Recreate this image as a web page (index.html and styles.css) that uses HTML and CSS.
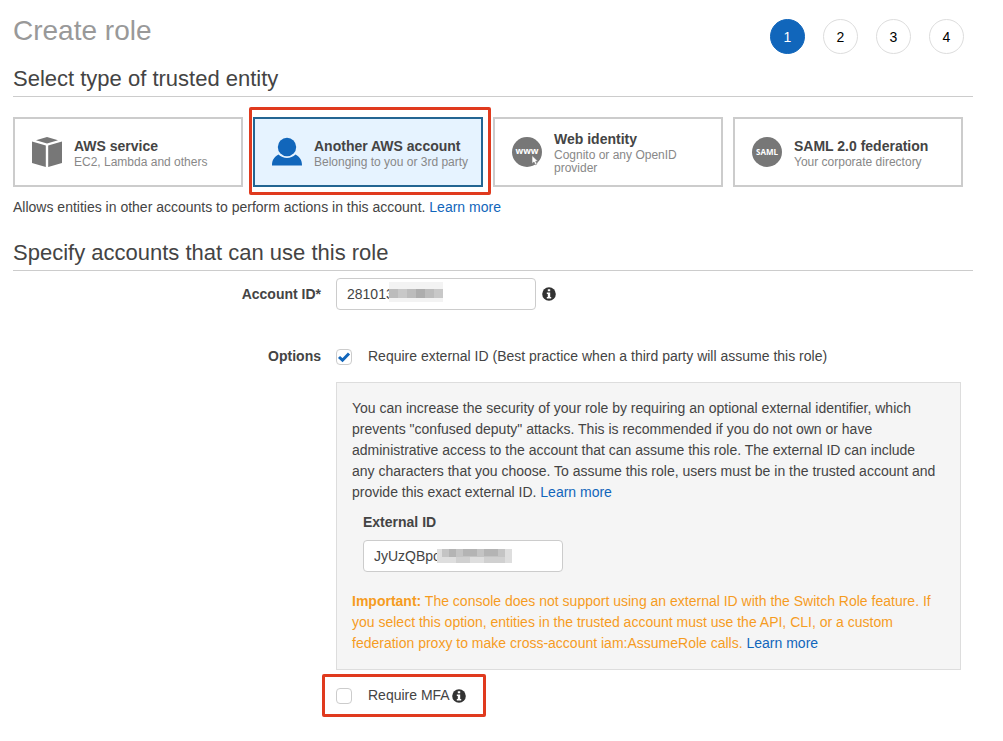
FILE: index.html
```html
<!DOCTYPE html>
<html lang="en">
<head>
    <meta charset="utf-8">
    <title>Create role</title>
    <link rel="stylesheet" href="styles.css">
</head>
<body>
    <header class="page-header">
        <h1>Create role</h1>
        <ol class="steps">
            <li class="step active">1</li>
            <li class="step">2</li>
            <li class="step">3</li>
            <li class="step">4</li>
        </ol>
    </header>

    <main>
        <h2>Select type of trusted entity</h2>
        <div class="entities">
            <button type="button" class="entity">
                <svg class="entity-icon" viewBox="0 0 30 30" aria-hidden="true">
                    <path fill="#777" d="M15 0 L26 3.200 L15 6.500 L4 3.200Z M0 4.500 L13.800 8.500 V30 L0 26Z M30 4.500 L16.200 8.500 V30 L30 26Z"/>
                </svg>
                <span class="entity-text">
                    <strong>AWS service</strong>
                    <small>EC2, Lambda and others</small>
                </span>
            </button>
            <button type="button" class="entity selected" aria-pressed="true">
                <svg class="entity-icon" viewBox="0 0 30 30" aria-hidden="true">
                    <path fill="#1166bb" d="M0 28.500 C0 23 2 20 6.500 17.500 C11 22 19 22 23.500 17.500 C28 20 30 23 30 28.500Z"/>
                    <circle cx="15" cy="10" r="9.200" fill="#1166bb"/>
                </svg>
                <span class="entity-text">
                    <strong>Another AWS account</strong>
                    <small>Belonging to you or 3rd party</small>
                </span>
                <span class="callout callout-entity"></span>
            </button>
            <button type="button" class="entity">
                <svg class="entity-icon" viewBox="0 0 30 30" aria-hidden="true">
                    <circle cx="15" cy="15" r="15" fill="#777"/>
                    <text x="15" y="17" class="icon-www">www</text>
                    <path fill="#fff" stroke="#777" stroke-width=".6" d="M20 18.500 V26.500 L22 25 L23.300 27.800 L25 27 L23.700 24.300 H26Z"/>
                </svg>
                <span class="entity-text">
                    <strong>Web identity</strong>
                    <small>Cognito or any OpenID provider</small>
                </span>
            </button>
            <button type="button" class="entity">
                <svg class="entity-icon" viewBox="0 0 30 30" aria-hidden="true">
                    <circle cx="15" cy="15" r="15" fill="#777"/>
                    <text x="15" y="18" class="icon-saml">SAML</text>
                </svg>
                <span class="entity-text">
                    <strong>SAML 2.0 federation</strong>
                    <small>Your corporate directory</small>
                </span>
            </button>
        </div>
        <p class="entity-note">Allows entities in other accounts to perform actions in this account. <a href="#">Learn more</a></p>

        <h2>Specify accounts that can use this role</h2>
        <form class="role-form">
            <label class="row-label" for="account-id">Account ID*</label>
            <div class="account-field">
                <span class="masked">
                    <input type="text" class="text-input" id="account-id" value="281013">
                    <svg class="mask mask-account" viewBox="0 0 54 20" aria-hidden="true">
                        <path fill="#f3f3f3" d="M0 0H54V20H0Z"/>
                        <path fill="#bcbcbc" d="M0 7H54V16H0Z"/>
                        <path fill="#c8c8c8" d="M9 7H18V16H9Z M45 7H54V16H45Z"/>
                        <path fill="#adadad" d="M27 7H36V16H27Z"/>
                    </svg>
                </span>
                <svg class="info" viewBox="0 0 14 14" role="img" aria-label="Info">
                    <circle cx="7" cy="7" r="6.800" fill="#333"/>
                    <path fill="#fff" d="M5.800 2.200H8.200V4.200H5.800Z M4.800 5.400H8.200V10H9.200V11.500H4.800V10H5.800V6.900H4.800Z"/>
                </svg>
            </div>

            <span class="row-label">Options</span>
            <div class="options">
                <label class="option">
                    <input type="checkbox" class="checkbox" checked>
                    <span>Require external ID (Best practice when a third party will assume this role)</span>
                </label>

                <div class="panel">
                    <p>You can increase the security of your role by requiring an optional external identifier, which prevents "confused deputy" attacks. This is recommended if you do not own or have administrative access to the account that can assume this role. The external ID can include any characters that you choose. To assume this role, users must be in the trusted account and provide this exact external ID. <a href="#">Learn more</a></p>
                    <div class="external">
                        <label for="external-id">External ID</label>
                        <span class="masked">
                            <input type="text" class="text-input" id="external-id" value="JyUzQBpc">
                            <svg class="mask mask-external" viewBox="0 0 75 14" aria-hidden="true">
                                <path fill="#dedede" d="M0 0H75V14H0Z"/>
                                <path fill="#c4c4c4" d="M5 0H68V8H5Z"/>
                                <path fill="#b4b4b4" d="M12 0H19V8H12Z M26 0H40V7H26Z M47 0H61V7H47Z"/>
                                <path fill="#d0d0d0" d="M19 8H33V14H19Z M47 8H68V14H47Z"/>
                            </svg>
                        </span>
                    </div>
                    <p class="important"><strong>Important:</strong> The console does not support using an external ID with the Switch Role feature. If you select this option, entities in the trusted account must use the API, CLI, or a custom federation proxy to make cross-account iam:AssumeRole calls. <a href="#">Learn more</a></p>
                </div>

                <div class="mfa">
                    <label class="option">
                        <input type="checkbox" class="checkbox">
                        <span>Require MFA</span>
                    </label>
                    <svg class="info" viewBox="0 0 14 14" role="img" aria-label="Info">
                        <circle cx="7" cy="7" r="6.800" fill="#333"/>
                        <path fill="#fff" d="M5.800 2.200H8.200V4.200H5.800Z M4.800 5.400H8.200V10H9.200V11.500H4.800V10H5.800V6.900H4.800Z"/>
                    </svg>
                    <span class="callout callout-mfa"></span>
                </div>
            </div>
        </form>
    </main>
</body>
</html>
```
FILE: styles.css
```css
* {
    box-sizing: border-box;
}

body {
    margin: 0;
    padding: 14px 30px 20px 13px;
    background: #fff;
    color: #444;
    font-family: "Helvetica Neue", "Liberation Sans", Arial, sans-serif;
    font-size: 14px;
    line-height: 21px;
}

h1, h2, p {
    margin: 0;
    font-weight: normal;
}

a {
    color: #1166bb;
    text-decoration: none;
}

/* Header */
.page-header {
    display: flex;
    justify-content: space-between;
    align-items: flex-start;
    padding-right: 9px;
}

h1 {
    color: #999;
    font-size: 28px;
    line-height: 34px;
}

.steps {
    display: flex;
    gap: 18px;
    margin: 0;
    padding: 5px 0 0;
    list-style: none;
}

.step {
    width: 35px;
    height: 35px;
    border: 1px solid #ddd;
    border-radius: 50%;
    color: #000;
    line-height: 34px;
    text-align: center;
}

.step.active {
    border-color: #1166bb;
    background: #1166bb;
    color: #fff;
}

h2 {
    padding: 11px 0 3px;
    border-bottom: 1px solid #ccc;
    font-size: 22px;
    line-height: 28px;
}

/* Trusted entity cards */
.entities {
    display: grid;
    grid-template-columns: repeat(4, 1fr);
    gap: 10px;
    padding: 20px 10px 0 0;
}

.entity {
    position: relative;
    display: flex;
    align-items: center;
    gap: 12px;
    height: 70px;
    padding: 0 8px 0 17px;
    border: 2px solid #ccc;
    background: #fff;
    color: #444;
    font-family: inherit;
    text-align: left;
    cursor: pointer;
}

.entity.selected {
    border-color: #236592;
    background: #e6f3ff;
}

.entity-icon {
    flex: none;
    width: 30px;
    height: 30px;
}

.entity-text strong,
.entity-text small {
    display: block;
}

.entity-text strong {
    font-size: 14px;
    line-height: 20px;
}

.entity-text small {
    color: #888;
    font-size: 12px;
    line-height: 13px;
}

.icon-www,
.icon-saml {
    fill: #fff;
    font-family: "Open Sans", sans-serif;
    font-weight: bold;
    text-anchor: middle;
}

.icon-www {
    font-size: 9px;
}

.icon-saml {
    font-size: 8px;
}

.entity-note {
    padding: 10px 0;
}

/* Red callout frames */
.callout {
    position: absolute;
    border: 3px solid #e03a1e;
    border-radius: 2px;
    pointer-events: none;
}

.callout-entity {
    top: -12px;
    right: -10px;
    bottom: -10px;
    left: -6px;
}

.callout-mfa {
    top: -11px;
    right: -20px;
    bottom: -11px;
    left: -14px;
}

/* Form */
.role-form {
    display: grid;
    grid-template-columns: 308px 1fr;
    column-gap: 15px;
    row-gap: 36px;
    padding: 7px 12px 0 0;
}

.row-label {
    font-weight: bold;
    text-align: right;
}

label.row-label {
    padding-top: 6px;
}

.account-field {
    display: flex;
    align-items: center;
    gap: 6px;
}

.text-input {
    display: block;
    width: 200px;
    height: 32px;
    padding: 0 10px;
    border: 1px solid #ccc;
    border-radius: 4px;
    background: #fff;
    color: #444;
    font-family: inherit;
    font-size: 14px;
}

.masked {
    position: relative;
}

.mask {
    position: absolute;
}

.mask-account {
    top: 4px;
    left: 53px;
    width: 54px;
    height: 20px;
}

.mask-external {
    top: 9px;
    left: 74px;
    width: 75px;
    height: 14px;
}

.info {
    flex: none;
    width: 14px;
    height: 14px;
}

.option {
    display: flex;
    align-items: center;
    gap: 16px;
}

.checkbox {
    flex: none;
    width: 16px;
    height: 16px;
    margin: 0;
    border: 1px solid #ccc;
    border-radius: 4px;
    background: #fff;
    appearance: none;
}

.checkbox:checked {
    background: #fff url("data:image/svg+xml,%3Csvg xmlns='http://www.w3.org/2000/svg' viewBox='0 0 14 14'%3E%3Cpath d='M2 7L5.500 10.200L12 3.500' fill='none' stroke='%231166bb' stroke-width='3'/%3E%3C/svg%3E") center no-repeat;
}

/* External ID panel */
.panel {
    margin: 15px 0;
    padding: 15px 20px 15px 15px;
    border: 1px solid #ddd;
    background: #f5f5f5;
}

.external {
    display: flex;
    flex-direction: column;
    align-items: flex-start;
    gap: 7px;
    padding: 9px 11px 19px;
}

.external label {
    font-weight: bold;
}

.important {
    color: #f59c1f;
}

.mfa {
    position: relative;
    display: inline-flex;
    align-items: center;
    gap: 2px;
}
```
